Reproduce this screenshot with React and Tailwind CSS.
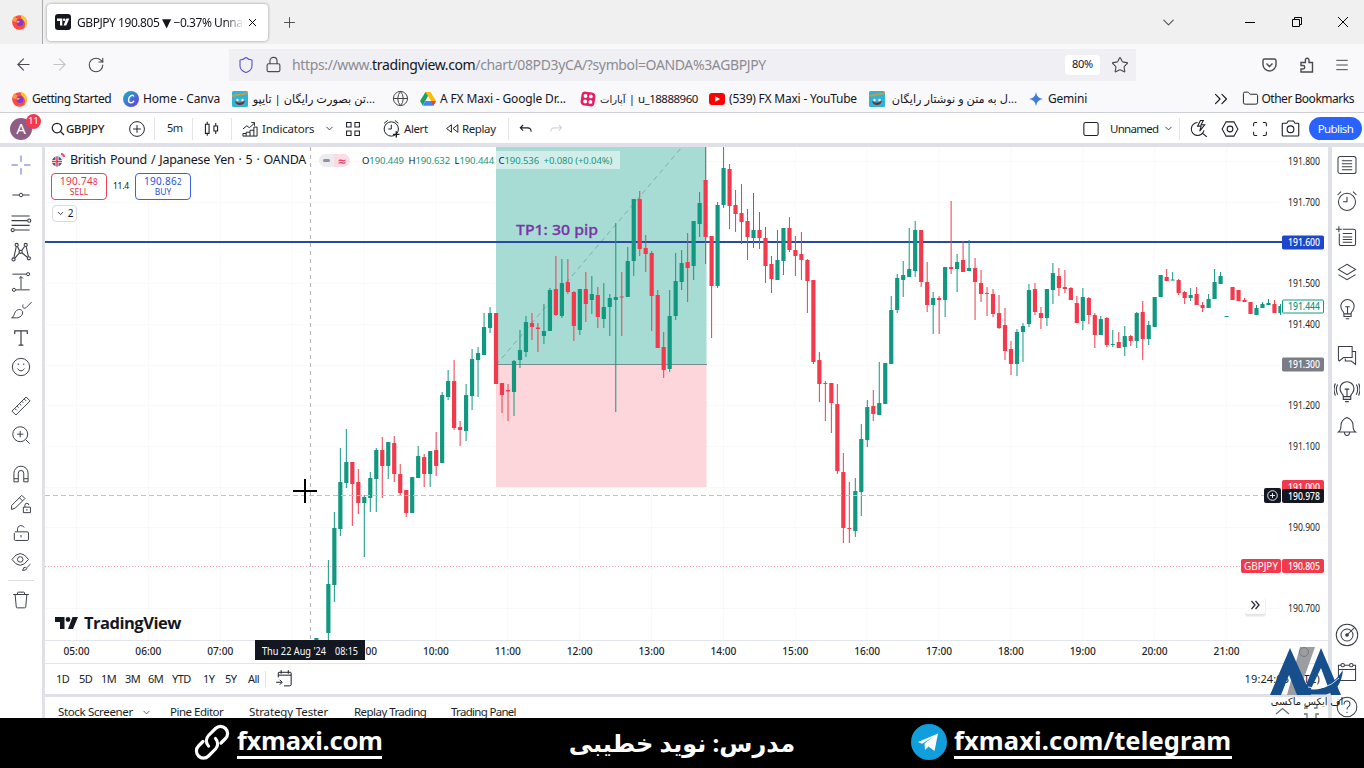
import { ChevronDown, ChevronsRight, Folder, Globe, Menu, Plus, RotateCw, ArrowLeft, ArrowRight, Star, Lock, Shield, X } from "lucide-react";

const UP = "#129880";
const DOWN = "#f23a4c";

// 5 minute candles: [high, bodyTop, bodyBottom, low, direction], null = no candle
const candles = [
  null,
  [638, 638, 640, 640, 1],
  null,
  [560, 584, 633, 640, 1],
  [512, 528, 585, 602, 1],
  [448, 482, 529, 536, 1],
  [429, 462, 483, 488, 1],
  [462, 462, 484, 526, 0],
  [469, 482, 503, 514, 0],
  [495, 497, 503, 557, 1],
  [472, 478, 498, 512, 1],
  [448, 450, 479, 512, 1],
  [437, 450, 466, 498, 0],
  [442, 442, 466, 479, 1],
  [436, 443, 474, 482, 0],
  [464, 474, 493, 496, 0],
  [490, 490, 513, 517, 0],
  [477, 477, 513, 513, 1],
  [446, 456, 478, 478, 1],
  [454, 457, 474, 487, 0],
  [451, 451, 474, 487, 1],
  [432, 450, 466, 476, 0],
  [392, 395, 463, 463, 1],
  [370, 381, 397, 400, 1],
  [360, 381, 428, 430, 0],
  [421, 427, 430, 446, 0],
  [384, 395, 431, 441, 1],
  [349, 359, 396, 410, 1],
  [347, 353, 360, 397, 1],
  [313, 327, 355, 355, 1],
  [307, 313, 328, 333, 1],
  [313, 313, 384, 384, 0],
  [383, 383, 395, 413, 0],
  [384, 390, 391.5, 421, 0],
  [360, 361, 392, 416, 1],
  [330, 350, 360, 368, 1],
  [316, 322, 352, 357, 1],
  [313, 323, 327, 340, 0],
  [323, 327.5, 329, 352, 0],
  [304, 331, 336, 344, 1],
  [288, 290, 331, 331, 1],
  [256, 289, 315, 316, 0],
  [259, 283, 316, 318, 1],
  [259, 282, 292, 294, 0],
  [291, 292, 326, 341, 0],
  [289, 289, 330, 335, 1],
  [272, 289, 304, 322, 0],
  [276, 294, 300, 314, 1],
  [287, 295, 317, 328, 0],
  [283, 307, 319, 328, 1],
  [294, 298, 307, 336, 1],
  [223, 297, 300, 412, 1],
  [272, 296.5, 297.5, 336, 0],
  [247, 261, 297, 297, 1],
  [199, 199, 261, 276, 1],
  [191, 199, 249, 256, 0],
  [235, 248, 254, 272, 0],
  [251, 253, 296, 331, 0],
  [290, 295, 348, 348, 0],
  [332, 347, 370, 378, 0],
  [290, 316, 369, 372, 1],
  [253, 281, 316, 320, 1],
  [250, 263, 282, 290, 1],
  [233, 262, 268, 302, 0],
  [221, 221, 266, 280, 1],
  [192, 203, 224, 237, 1],
  [147, 180, 237, 264, 0],
  [236, 236, 286, 338, 0],
  [202, 205, 286, 288, 1],
  [147, 168, 205, 208, 1],
  [164, 169, 206, 229, 0],
  [190, 205, 214, 232, 0],
  [184, 213, 222, 244, 0],
  [209, 221, 237, 260, 0],
  [193, 230, 238, 248, 1],
  [212, 230, 238, 249, 0],
  [227, 238, 266, 283, 0],
  [256, 264, 279, 293, 0],
  [230, 260, 280, 280, 1],
  [228, 228, 261, 275, 1],
  [217, 228, 250, 252, 0],
  [236, 250, 256, 276, 0],
  [232, 254, 260, 280, 0],
  [259, 260, 281, 313, 0],
  [280, 280, 362, 364, 0],
  [352, 360, 384, 402, 0],
  [381, 383, 384, 421, 0],
  [383, 383, 403, 433, 0],
  [384, 404, 471, 474, 0],
  [453, 472, 528, 543, 0],
  [482, 528, 529, 543, 0],
  [478, 491, 531, 537, 1],
  [424, 439, 492, 516, 1],
  [400, 407, 440, 447, 1],
  [390, 406, 414, 421, 0],
  [362, 403, 415, 415, 1],
  [363, 363, 404, 404, 1],
  [296, 310, 364, 364, 1],
  [274, 278, 310, 313, 1],
  [261, 275, 280, 297, 1],
  [228, 269, 277, 277, 1],
  [221, 230, 271, 277, 1],
  [230, 230, 282, 287, 0],
  [262, 282, 305, 312, 0],
  [292, 298, 305, 334, 1],
  [296, 298, 300, 334, 0],
  [267, 267, 300, 317, 1],
  [201, 267, 269, 274, 0],
  [254, 262, 269, 292, 1],
  [241, 260, 272, 272, 0],
  [240, 268, 271, 271, 1],
  [258, 268, 282, 320, 0],
  [270, 283, 294, 302, 0],
  [287, 293, 294, 316, 0],
  [289, 294, 314, 317, 0],
  [295, 313, 328, 329, 0],
  [308, 325, 351, 360, 0],
  [341, 349, 364, 375, 0],
  [329, 332, 364, 376, 1],
  [323, 326, 332, 362, 1],
  [284, 290, 324, 327, 1],
  [283, 289, 312, 315, 0],
  [307, 313, 318, 329, 0],
  [289, 289, 318, 326, 1],
  [263, 273, 290, 304, 1],
  [268, 276, 288, 296, 0],
  [270, 287, 289, 293, 0],
  [287, 288, 300, 300, 0],
  [296, 303, 323, 323, 0],
  [288, 297, 321, 330, 1],
  [297, 298, 315, 324, 0],
  [313, 315, 335, 348, 0],
  [316, 319, 335, 335, 1],
  [317, 318, 345, 347, 0],
  [330, 344, 345, 347, 1],
  [332, 342, 348, 348, 0],
  [326, 336, 347, 356, 1],
  [335, 336, 341, 346, 0],
  [312, 313, 341, 348, 1],
  [301, 312, 339, 360, 0],
  [321, 325, 339, 345, 1],
  [297, 297, 327, 327, 1],
  [275, 275, 297, 297, 1],
  [269, 277, 281, 281, 0],
  [272, 279.5, 280.5, 280.5, 1],
  [279, 280, 293, 295, 0],
  [291, 292, 298, 304, 0],
  [288, 295, 298, 301, 1],
  [287, 294, 305, 305, 0],
  [302, 305, 308, 312, 0],
  [294, 299, 308, 308, 1],
  [269, 282, 299, 299, 1],
  [272, 276, 284, 284, 1],
  [316, 316, 317, 317, 1],
  [287, 287, 300, 300, 0],
  [290, 290, 301, 301, 0],
  [298, 300, 302, 302, 0],
  [302, 302, 314, 314, 0],
  [305, 308, 315, 315, 1],
  [302, 304, 308, 308, 1],
  [299, 303, 305, 305, 1],
  [300, 304, 313, 313, 0],
  [304, 306, 313, 315, 1],
];

const prices = [
  ["191.800", 161], ["191.700", 202], ["191.500", 283], ["191.400", 324],
  ["191.200", 405], ["191.100", 446], ["190.900", 527], ["190.700", 608],
];
const gridY = [161, 202, 283, 324, 365, 405, 446, 487, 527, 608];
const hours = ["05:00", "06:00", "07:00", null, "09:00", "10:00", "11:00", "12:00", "13:00", "14:00", "15:00", "16:00", "17:00", "18:00", "19:00", "20:00", "21:00"];

function Icon({ size = 22, sw = 1.25, className = "", children }) {
  return (
    <svg
      width={size}
      height={size}
      viewBox="0 0 28 28"
      fill="none"
      stroke="currentColor"
      strokeWidth={sw}
      className={`shrink-0 ${className}`}
    >
      {children}
    </svg>
  );
}

function PriceTag({ y, text, fill, color = "#fff", stroke }) {
  return (
    <g>
      <rect x="1282.5" y={y - 6.5} width="41" height="13" rx="1" fill={fill} stroke={stroke || fill} />
      <text x="1288" y={y + 3.8} textLength="32" lengthAdjust="spacingAndGlyphs" fill={color} fontWeight="500">{text}</text>
    </g>
  );
}

function Chart() {
  return (
    <svg width="1283" height="517" viewBox="45 147 1283 517" className="block font-['Noto_Sans',sans-serif]" fontSize="10">
      <rect x="45" y="147" width="1283" height="517" fill="#fff" />
      {gridY.map((y) => (
        <line key={y} x1="45" x2="1281" y1={y + 0.5} y2={y + 0.5} stroke="#f9f9fa" />
      ))}
      {hours.map((h, i) => (
        <line key={i} y1="147" y2="640" x1={76.5 + i * 71.88} x2={76.5 + i * 71.88} stroke="#f9f9fa" />
      ))}

      {/* long position */}
      <rect x="496" y="147" width="210.5" height="218" fill="#a6dcd4" />
      <rect x="496" y="365" width="210.5" height="122" fill="#fdd6dc" />
      <line x1="496" x2="707" y1="364.5" y2="364.5" stroke="#7b8a8c" />
      <line x1="496" y1="365" x2="682" y2="147" stroke="#86a8a5" strokeDasharray="5 4" />

      {/* horizontal level */}
      <rect x="45" y="241" width="1237" height="2" fill="#2849a3" />
      <line x1="45" x2="1241" y1="566.5" y2="566.5" stroke="#f0a0a8" strokeDasharray="1 2" />

      {candles.map((c, i) => {
        if (!c) return null;
        const x = 310.4 + i * 5.988;
        const color = c[4] ? UP : DOWN;
        return (
          <g key={i} fill={color}>
            <rect x={x - 0.5} y={c[0]} width="1" height={Math.max(c[3] - c[0], 1)} />
            <rect x={x - 2.1} y={c[1]} width={i === 162 ? 2.6 : 4.2} height={Math.max(c[2] - c[1], 1)} rx="0.5" />
          </g>
        );
      })}

      <text x="516" y="234.5" textLength="82" lengthAdjust="spacingAndGlyphs" fontSize="15" fontWeight="500" fill="#7a35a8" stroke="#7a35a8" strokeWidth="0.3">TP1: 30 pip</text>

      {/* crosshair */}
      <line x1="310.5" x2="310.5" y1="147" y2="640" stroke="#b2b4bb" strokeDasharray="4 4" />
      <line x1="45" x2="1265" y1="495.5" y2="495.5" stroke="#bfc1c7" strokeDasharray="5 3" />
      <path d="M293 491h24M305 479v24" stroke="#000" strokeWidth="2" />

      {/* price axis */}
      <g fill="#1c1f27">
        {prices.map(([p, y]) => (
          <text key={p} x="1288" y={y + 4} textLength="32" lengthAdjust="spacingAndGlyphs">{p}</text>
        ))}
      </g>
      <PriceTag y={242.5} text="191.600" fill="#1d46cc" />
      <PriceTag y={306.5} text="191.444" fill="#fff" color={UP} stroke={UP} />
      <PriceTag y={364.5} text="191.300" fill="#7b7d86" />
      <PriceTag y={487} text="191.000" fill="#f23a4c" />
      <PriceTag y={496} text="190.978" fill="#131722" />
      <rect x="1264" y="488" width="17" height="15" rx="2" fill="#131722" />
      <circle cx="1272.5" cy="495.5" r="4.8" fill="none" stroke="#fff" strokeWidth="0.9" />
      <path d="M1270 495.5h5M1272.5 493v5" stroke="#fff" strokeWidth="0.9" />
      <rect x="1241" y="559" width="40" height="14" rx="2" fill="#f23a4c" />
      <text x="1244" y="570" textLength="34" lengthAdjust="spacingAndGlyphs" fill="#fff">GBPJPY</text>
      <PriceTag y={566} text="190.805" fill="#f23a4c" />

      {/* scroll to last bar */}
      <rect x="1245" y="597" width="21" height="20" rx="3" fill="#f1f1f2" />
      <rect x="1245.500" y="596.5" width="19.500" height="19" rx="2" fill="#e2e2e4" />
      <rect x="1245" y="594" width="20" height="20" rx="2" fill="#fff" />
      <path d="M1251.5 601l3.5 4-3.5 4M1255.5 601l3.5 4-3.5 4" fill="none" stroke="#2a2e39" strokeWidth="1.3" />

      {/* time axis */}
      <line x1="45" x2="1328" y1="640.5" y2="640.5" stroke="#e3e5ec" />
      <line x1="45" x2="1328" y1="663.5" y2="663.5" stroke="#e3e5ec" />
      <g fill="#1c1f27" fontWeight="500" textAnchor="middle">
        {hours.map((h, i) => h && (
          <text key={h} x={76.5 + i * 71.88} y="655" textLength="26" lengthAdjust="spacingAndGlyphs">{h}</text>
        ))}
      </g>
      <rect x="255" y="640" width="110" height="20" fill="#131722" />
      <g fill="#fff">
        <text x="262" y="655" textLength="64" lengthAdjust="spacingAndGlyphs">Thu 22 Aug '24</text>
        <text x="335" y="655" textLength="23" lengthAdjust="spacingAndGlyphs">08:15</text>
      </g>
    </svg>
  );
}

function TabBar() {
  return (
    <div className="flex h-[44px] items-center bg-[#f0f0f0]">
      <Firefox className="ml-3" />
      <div className="ml-[14px] h-[44px] w-px bg-[#a9a9ad]" />
      <div className="ml-1 flex h-[37px] w-[221px] items-center rounded bg-white shadow-[0_0_3px_rgba(0,0,0,0.4)]">
        <TvBadge />
        <span className="ml-[6px] w-[167px] overflow-hidden pt-px whitespace-nowrap text-[12px] tracking-[-0.45px] text-[#15141a] [mask-image:linear-gradient(to_right,black_88%,transparent)]">
          GBPJPY 190.805 ▼ −0.37% Unna
        </span>
        <X size={13} strokeWidth={1.8} className="ml-[2px]" />
      </div>
      <Plus size={17} strokeWidth={1.3} className="ml-[13px] text-[#444]" />
      <ChevronDown size={19} strokeWidth={1.4} className="ml-auto mr-[67px] text-[#555]" />
      <div className="h-px w-[10px] bg-black" />
      <svg width="12" height="12" viewBox="0 0 12 12" fill="none" stroke="#000" className="ml-[36px]">
        <path d="M1.5 3.5h7v7h-7zM3.5 3.5v-2h7v7h-2" />
      </svg>
      <svg width="12" height="12" viewBox="0 0 12 12" stroke="#000" className="ml-[34px] mr-[15px]">
        <path d="M1 1l10 10M11 1L1 11" />
      </svg>
    </div>
  );
}

function Firefox({ className = "" }) {
  return (
    <svg width="16" height="16" viewBox="0 0 16 16" className={`shrink-0 ${className}`}>
      <circle cx="7.500" cy="8.500" r="7.300" fill="#ff4a3d" />
      <path d="M9 .5c3 1.300 6 4 6 8a7 7 0 0 1-3 5.500c2-4 1-7-2-9C9 4 8.500 2 9 .5z" fill="#ffc933" />
      <path d="M.5 7c0-2 1-4 2-5 .5 1.500 1.500 2 3 2L4 8z" fill="#ff9640" />
      <circle cx="8" cy="8.600" r="3.500" fill="#8338d8" />
      <path d="M4 8c1.500-2 3-1.500 4-.5L6 9z" fill="#ffb03a" />
    </svg>
  );
}

function TvBadge() {
  return (
    <svg width="16" height="16" viewBox="0 0 16 16" className="ml-2 shrink-0">
      <rect width="16" height="16" rx="3" fill="#131722" />
      <path d="M2 4.500h5.300v7H5V7H2zM11.300 4.500h3l-3 7H8.500z" fill="#fff" />
      <circle cx="9.200" cy="5.700" r="1.300" fill="#fff" />
    </svg>
  );
}

function NavBar() {
  return (
    <div className="flex h-[41px] items-center bg-[#f9f9fb] text-[#4a4a52]">
      <ArrowLeft size={19} strokeWidth={1.4} className="ml-[14px]" />
      <ArrowRight size={19} strokeWidth={1.4} className="ml-[17px] text-[#c4c4c9]" />
      <RotateCw size={18} strokeWidth={1.5} className="ml-[18px]" />
      <div className="ml-[124px] flex h-8 w-[907px] items-center bg-[#f0f0f4]">
        <Shield size={18} strokeWidth={1.5} className="ml-2 text-[#5b55c9]" />
        <Lock size={17} strokeWidth={1.6} className="ml-[10px]" />
        <span className="ml-[10px] whitespace-nowrap text-[14px] tracking-[-0.365px] text-[#8b8b93]">
          https://www.<span className="text-[#15141a]">tradingview.com</span>/chart/08PD3yCA/?symbol=OANDA%3AGBPJPY
        </span>
        <span className="ml-auto flex h-5 w-[35px] items-center justify-center rounded-sm bg-white text-[11px] tracking-[-0.3px] text-[#15141a]">80%</span>
        <Star size={18} strokeWidth={1.5} className="ml-[11px] mr-[7px]" />
      </div>
      <svg width="15" height="14" viewBox="0 0 15 14" fill="none" stroke="currentColor" strokeWidth="1.400" className="ml-auto">
        <path d="M2.500 1h10a1.500 1.500 0 0 1 1.500 1.500V6.500a6.500 6.500 0 0 1-13 0v-4A1.500 1.500 0 0 1 2.500 1zM4.500 5.500l3 3 3-3" />
      </svg>
      <svg width="15" height="16" viewBox="0 0 15 16" fill="none" stroke="currentColor" strokeWidth="1.400" className="ml-[22px]">
        <path d="M2 15h11.500V5.500H10V3a1.800 1.800 0 0 0-3.600 0v2.500H2V8.500h2a1.700 1.700 0 0 1 0 3.500H2z" />
      </svg>
      <Menu size={16} strokeWidth={1.5} className="ml-[20px] mr-[14px]" />
    </div>
  );
}

function CartoonFace() {
  return (
    <svg width="16" height="16" viewBox="0 0 16 16" className="shrink-0">
      <rect width="16" height="16" rx="1.500" fill="#2fb4d6" />
      <path d="M0 4L16 1v2L0 6z" fill="#c59a4a" />
      <circle cx="5.500" cy="9" r="1.200" fill="#fff" />
      <circle cx="10.500" cy="9" r="1.200" fill="#fff" />
      <path d="M3 10q5 3.500 10-.5-1 4.500-5 4.500t-5-4z" fill="#7a2b33" />
    </svg>
  );
}

function Bookmarks() {
  return (
    <div className="flex h-[28px] items-center border-b border-[#cfcfd8] bg-[#f9f9fb] text-[12px] leading-none whitespace-nowrap text-[#15141a]">
      <Firefox className="ml-3" />
      <span className="ml-1 w-[91px] tracking-[-0.48px]">Getting Started</span>
      <svg width="16" height="16" viewBox="0 0 16 16" className="shrink-0">
        <defs>
          <linearGradient id="canva" x1="0" y1="0" x2="1" y2="1">
            <stop offset="0" stopColor="#18b5c9" />
            <stop offset="1" stopColor="#6a35e0" />
          </linearGradient>
        </defs>
        <circle cx="8" cy="8" r="8" fill="url(#canva)" />
        <path d="M11 5.500C9.500 3 5.500 5 5.500 9c0 3.500 4 3.500 5.500.8" fill="none" stroke="#fff" strokeWidth="1.400" />
      </svg>
      <span className="ml-1 w-[89px] tracking-[-0.15px]">Home - Canva</span>
      <CartoonFace />
      <span dir="rtl" className="ml-1 w-[123px] text-right text-[11.300px]">...تن بصورت رایگان | تایپو</span>
      <Globe size={17} strokeWidth={1.400} className="ml-[17px] shrink-0 text-[#444]" />
      <svg width="16" height="14" viewBox="0 0 16 14" className="ml-[11px] shrink-0">
        <path d="M5.500 0h5L16 9h-5z" fill="#fbbc04" />
        <path d="M5.500 0L8 4 2.700 13.500 0 9z" fill="#1aa260" />
        <path d="M5.300 9H16l-2.700 4.700H2.700z" fill="#4285f4" />
        <path d="M11 9h5l-2.700 4.700z" fill="#ea4335" />
      </svg>
      <span className="ml-1 w-[140px] tracking-[-0.15px]">A FX Maxi - Google Dr...</span>
      <svg width="16" height="16" viewBox="0 0 16 16" className="shrink-0">
        <rect x="1" y="1" width="14" height="14" rx="4" fill="#e91e63" transform="rotate(8 8 8)" />
        <g fill="#fff">
          <circle cx="5.500" cy="5" r="1.900" />
          <circle cx="10.800" cy="5.400" r="1.900" />
          <circle cx="5.200" cy="10.500" r="1.900" />
          <circle cx="10.400" cy="10.900" r="1.900" />
        </g>
      </svg>
      <span className="ml-1 w-[109px] text-[11.500px] tracking-[-0.5px]"><span className="text-[10px] tracking-normal">آپارات</span> | u_18888960</span>
      <svg width="16" height="12" viewBox="0 0 16 12" className="shrink-0">
        <rect width="16" height="12" rx="3" fill="#f00" />
        <path d="M6.300 3.300v5.400L11 6z" fill="#fff" />
      </svg>
      <span className="ml-1 w-[140px] tracking-[-0.22px]">(539) FX Maxi - YouTube</span>
      <CartoonFace />
      <span dir="rtl" className="ml-1 w-[128px] text-right text-[11.300px]">...ل به متن و نوشتار رایگان</span>
      <svg width="14" height="14" viewBox="0 0 14 14" className="ml-[12px] shrink-0">
        <path d="M7 0q.8 6.200 7 7-6.200.8-7 7-.8-6.200-7-7 6.200-.8 7-7z" fill="#3f7bd8" />
      </svg>
      <span className="ml-[5px] tracking-[-0.2px]">Gemini</span>
      <ChevronsRight size={22} strokeWidth={1.200} className="ml-auto mr-[10px]" />
      <Folder size={17} strokeWidth={1.300} />
      <span className="ml-[2px] mr-[10px] tracking-[-0.48px]">Other Bookmarks</span>
    </div>
  );
}

const Sep = ({ className }) => <div className={`h-[22px] w-px shrink-0 bg-[#e3e4ea] ${className}`} />;

function Toolbar() {
  return (
    <div className="flex h-[30px] items-center bg-white pt-px text-[11.5px] whitespace-nowrap text-[#1c1f27]">
      <div className="relative ml-[10px] flex size-[22px] shrink-0 items-center justify-center rounded-full bg-[#8e5d86] text-[15px] text-white">
        A
        <span className="absolute -right-[9px] -top-[4px] flex size-[15px] items-center justify-center rounded-full bg-[#f23a4c] text-[9px]">11</span>
      </div>
      <Icon size={14} sw={2.500} className="ml-[19px]"><circle cx="12" cy="12" r="9.500" /><path d="M19 19l7 7" /></Icon>
      <span className="ml-px w-[62px] text-[11.500px] font-medium tracking-[-0.3px]">GBPJPY</span>
      <Icon size={18} sw={1.500}><circle cx="14" cy="14" r="11.500" /><path d="M14 8v12M8 14h12" /></Icon>
      <Sep className="ml-[8px]" />
      <span className="ml-[12px] w-[25px] text-[11px] tracking-[-0.6px]">5m</span>
      <Sep />
      <Icon size={17} sw={1.800} className="ml-[10px]"><path d="M4 7h6v15H4zM7 3v4M7 22v4M18 10h6v8h-6zM21 5v5M21 18v5" /></Icon>
      <Sep className="ml-[11px]" />
      <Icon size={18} sw={1.500} className="ml-[9px]"><path d="M3 25h22V11h-5v14M20 16h-6v9M14 19H8v6M3 25v-4h5M3 14l6-5 4 3 8-7M16 4h5v5" /></Icon>
      <span className="ml-[3px] w-[62px] tracking-[-0.2px]">Indicators</span>
      <ChevronDown size={11} strokeWidth={1.800} />
      <Icon size={18} sw={1.600} className="ml-[9px]"><path d="M4 4h7v7H4zM17 4h7v7h-7zM4 17h7v7H4zM17 17h7v7h-7z" /></Icon>
      <Icon size={20} sw={1.400} className="ml-[20px]"><circle cx="13" cy="14" r="10" /><path d="M13 8v6H9M3 6l5-4M18 2l5 4" /><path d="M20 17v9M15.500 21.500h9" strokeWidth="2" /></Icon>
      <span className="ml-[2px] w-[41px] tracking-[-0.4px]">Alert</span>
      <Icon size={15} sw={1.800}><path d="M12 7v14L3 14zM24 7v14l-9-7z" /></Icon>
      <span className="ml-[2px] w-[46px] tracking-[-0.4px]">Replay</span>
      <Sep />
      <Icon size={16} sw={1.900} className="ml-[9px]"><path d="M9 7l-5 5 5 5M4 12h13q6 0 6 7" /></Icon>
      <Icon size={16} sw={1.900} className="ml-[14px] text-[#d5d6da]"><path d="M19 7l5 5-5 5M24 12H11q-6 0-6 7" /></Icon>
      <Icon size={20} sw={1.500} className="ml-auto"><rect x="4" y="5" width="20" height="18" rx="2.500" /></Icon>
      <span className="ml-[9px] w-[53px] tracking-[-0.7px]">Unnamed</span>
      <ChevronDown size={11} strokeWidth={1.800} />
      <Sep className="ml-[5px]" />
      <Icon size={20} sw={1.500} className="ml-[9px]"><path d="M12 5a9 9 0 1 0 9 11M19 20l6 5M16 2l-4 8h5l-2 7 7-9h-5l3-6z" /></Icon>
      <Icon size={20} sw={1.500} className="ml-[11px]"><path d="M8.500 4h11L25 14l-5.500 10h-11L3 14z" /><circle cx="14" cy="14" r="4" /></Icon>
      <Icon size={20} sw={1.500} className="ml-[10px]"><path d="M5 10V7q0-2 2-2h3M18 5h3q2 0 2 2v3M23 18v3q0 2-2 2h-3M10 23H7q-2 0-2-2v-3" /></Icon>
      <Icon size={21} sw={1.500} className="ml-[10px]"><path d="M3 8q0-1 1-1h5l2-3h7l2 3h4q1 0 1 1v15q0 1-1 1H4q-1 0-1-1z" /><circle cx="14" cy="15" r="4.500" /></Icon>
      <div className="ml-[8px] mr-[2px] flex h-[23px] w-[53px] items-center justify-center rounded-full bg-[#2962ff] text-[11.5px] tracking-[-0.6px] text-white">Publish</div>
    </div>
  );
}

function LeftTools() {
  return (
    <div className="flex w-[42px] flex-col items-center bg-white text-[#3a3d47]">
      <Icon className="mt-[7px] text-[#5a68c0]"><path d="M14 2v8M14 18v8M2 14h8M18 14h8" /></Icon>
      <Icon className="mt-[8px]"><path d="M3 14h8.500M16.500 14H25" /><circle cx="14" cy="14" r="2.300" /></Icon>
      <Icon className="mt-[6px]" sw={1.400}><path d="M2 5h23M2 11h20M2 17h23M6 23h19" /><circle cx="24.500" cy="11" r="2" /><circle cx="3.500" cy="23" r="2" /></Icon>
      <Icon className="mt-[7px]" sw={1.400}><path d="M8 7L5 21M9.500 7l3 6M15 15l7.500 6M18.500 7L15 12M12 15l-6 7M20.500 7L23.500 20" /><circle cx="13.500" cy="13.700" r="2" /><circle cx="8.500" cy="5" r="2" /><circle cx="20" cy="5" r="2" /><circle cx="4.500" cy="23.500" r="2" /><circle cx="24" cy="22" r="2" /></Icon>
      <Icon className="mt-[8px]"><path d="M3 4h18M7 24h18M14 23V7M11.500 9.500L14 7l2.500 2.500" /><circle cx="23" cy="4" r="2" /><circle cx="5" cy="24" r="2" /></Icon>
      <Icon className="mt-[6px]"><path d="M2 24c3-1 3-5 5-8 3-4 8-3 9 0 1 5-4 8-8 8zM16.500 7c-1 4 1 6 4 4l7-7" /></Icon>
      <Icon className="mt-[6px]" sw={1.500}><path d="M6 9V5h16v4M14 5v18M11 23h6" /></Icon>
      <Icon className="mt-[7px]"><circle cx="14" cy="14" r="11" /><path d="M9.500 16q4.500 6 9 0M10.500 9.500v2M17.500 9.500v2" /></Icon>
      <Icon className="mt-[17px]"><path d="M2.500 20.500l18-18 5 5-18 18zM6 17l2.500 2.500M9 14l2 2M12 11l2.500 2.500M15 8l2 2M18 5l2.500 2.500" /></Icon>
      <Icon className="mt-[7px]"><circle cx="13" cy="13" r="9.500" /><path d="M20 20l5 5M13 9v8M9 13h8" /></Icon>
      <Icon className="mt-[17px]"><path d="M5 24V13a9 9 0 0 1 18 0v11h-5.500V13a3.500 3.500 0 0 0-7 0v11zM5 20h5.500M17.500 20H23" /></Icon>
      <Icon className="mt-[8px]"><path d="M2 16L15 3l4 4L7 19l-5 2zM12 6l4 4M17 18h9v7h-9zM19 18v-2.500a2.500 2.500 0 0 1 5 0M21.500 20.500v2" /></Icon>
      <Icon className="mt-[7px]"><path d="M6 12.500h16q1.500 0 1.500 1.500v8q0 1.500-1.500 1.500H7q-1.500 0-1.500-1.500v-8M9.500 12V8.500A4.500 4.500 0 0 1 18 7M14 16.500v3" /></Icon>
      <Icon className="mt-[6px]"><path d="M2.500 12q10.500-15 21 0-10.500 15-21 0z" /><circle cx="13" cy="12" r="3.500" /><path d="M26 18l-6 6M20 22q-3-1-4 4 5 0 5.500-2.500" /></Icon>
      <div className="mt-[8px] h-px w-[26px] bg-[#dcdee5]" />
      <Icon className="mt-[8px]"><path d="M4 7h20M9.500 7V5q0-1 1-1h7q1 0 1 1v2M6.500 7l1.500 16q0 1 1.500 1h9q1.500 0 1.500-1L21.500 7" /></Icon>
    </div>
  );
}

function Bulb() {
  return (
    <>
      <path d="M10 20q0-2-2-4a7.500 7.500 0 1 1 12 0q-2 2-2 4zM10 20v3h8v-3M12 25.500h4M11.500 12h5M14 12v8" />
    </>
  );
}

function RightTools() {
  return (
    <div className="flex w-[32px] flex-col items-center bg-white pr-[2px] text-[#3a3d47]">
      <Icon size={24} sw={1.200} className="mt-[6px]"><rect x="3.500" y="4" width="21" height="20" rx="2.500" /><path d="M8 9h12M8 12.500h12M8 16h12M8 19.500h12" /></Icon>
      <Icon size={24} sw={1.200} className="mt-[12px]"><circle cx="14" cy="15" r="10" /><path d="M14 9v6H9.500M3 7l4-4M21 3l4 4" /></Icon>
      <Icon size={24} sw={1.200} className="mt-[12px]"><path d="M9 5h13q2 0 2 2v15q0 2-2 2H7q-2 0-2-2V10M9 10h11M9 14h11M9 17h11M9 20h11M1 5h7M4.500 1.500v7" /></Icon>
      <Icon size={24} sw={1.200} className="mt-[11px]"><path d="M14 5l10 6-10 6-10-6zM4 17l10 6 10-6" /></Icon>
      <Icon size={25} sw={1.200} className="mt-[12px]"><Bulb /></Icon>
      <div className="mt-[10px] h-px w-[25px] bg-[#dcdee5]" />
      <Icon size={24} sw={1.200} className="mt-[12px]"><path d="M4 4h16v13H10l-5 4-1-1zM20 10h4v15l-5-4h-7v-3" /></Icon>
      <Icon size={26} sw={1.200} className="mt-[11px]"><Bulb /><path d="M4 7q-3 5 0 11M1.500 6q-3 6 0 13M24 7q3 5 0 11M26.500 6q3 6 0 13" /></Icon>
      <Icon size={24} sw={1.200} className="mt-[10px]"><path d="M4 21q3-2 3-8 0-6 7-9 7 3 7 9 0 6 3 8zM11 21q0 4 3 4t3-4" /></Icon>
      <Icon size={24} sw={1.200} className="mt-[185px]"><circle cx="14" cy="14" r="12.500" /><circle cx="14" cy="14" r="7" /><circle cx="14" cy="14" r="1.500" fill="currentColor" /><path d="M14 14L23 5" /></Icon>
      <Icon size={24} sw={1.200} className="mt-[13px]"><path d="M4 6h20v18H4zM4 11h20" /><circle cx="9" cy="6" r="2" fill="#fff" /><circle cx="19" cy="6" r="2" fill="#fff" /></Icon>
      <Icon size={24} sw={1.200} className="mt-[11px]"><circle cx="14" cy="14" r="11.500" /><path d="M10.500 11q0-4 3.500-4t3.500 3.500q0 2-2 3.300-1.500 1-1.500 3.200M14 19.500v1.500" /></Icon>
    </div>
  );
}

function Legend() {
  return (
    <div className="absolute left-[6px] top-[3px] text-[#131722]">
      <div className="flex h-[20px] items-center whitespace-nowrap">
        <svg width="14" height="14" viewBox="0 0 14 14">
          <circle cx="10" cy="4" r="3" fill="#e9eaf0" />
          <path d="M10 1a3 3 0 0 1 3 3" stroke="#f0506a" strokeWidth="2" fill="none" />
          <circle cx="6" cy="8.500" r="5" fill="#3c5aa6" />
          <path d="M1 8.500h10M6 3.500v10" stroke="#fff" strokeWidth="3" />
          <path d="M1 8.500h10M6 3.500v10" stroke="#e0384c" strokeWidth="1.500" />
        </svg>
        <span className="ml-[5px] w-[237px] text-[12.500px] tracking-[-0.27px] [word-spacing:1px]">British Pound / Japanese Yen · 5 · OANDA</span>
        <span className="ml-[12px] flex h-[13px] w-[31px] text-[11px] leading-[13px]">
          <span className="flex w-[15px] items-center justify-center rounded-l-full bg-[#ececf0]"><i className="h-[3px] w-[7px] rounded bg-[#8f929c]" /></span>
          <span className="w-[16px] rounded-r-full bg-[#fbdce4] text-center font-bold text-[#e8466c]">≈</span>
        </span>
        <span className="ml-[8px] flex h-[18px] w-[262px] items-center gap-[4.500px] bg-white/50 pl-[4px] pt-[2px] text-[9.500px] tracking-[-0.08px]">
          {[["O", "190.449"], ["H", "190.632"], ["L", "190.444"], ["C", "190.536"]].map(([k, v]) => (
            <span key={k}>{k}<span className="text-[#129880]">{v}</span></span>
          ))}
          <span className="text-[#129880]">+0.080 (+0.04%)</span>
        </span>
      </div>
      <div className="mt-[3px] flex items-center text-center">
        <div className="flex h-[27px] w-[56px] flex-col justify-center rounded border border-[#e8415a] bg-white text-[#e8304a]">
          <span className="text-[10px] leading-[11px] tracking-[0.3px]">190.74<span className="text-[8px]">8</span></span>
          <span className="text-[8.500px] leading-[10px]">SELL</span>
        </div>
        <span className="w-[28px] text-[8.500px] tracking-[-0.2px]">11.4</span>
        <div className="flex h-[27px] w-[56px] flex-col justify-center rounded border border-[#3a63e0] bg-white text-[#2952e0]">
          <span className="text-[10px] leading-[11px] tracking-[0.3px]">190.86<span className="text-[8px]">2</span></span>
          <span className="text-[8.500px] leading-[10px]">BUY</span>
        </div>
      </div>
      <div className="ml-px mt-[5px] flex h-[17px] w-[25px] items-center justify-center gap-[3px] rounded-sm border border-[#d9dbe2] text-[10px]">
        <ChevronDown size={9} strokeWidth={2.200} />2
      </div>
    </div>
  );
}

function TvLogo() {
  return (
    <div className="absolute left-[10px] top-[465px] flex h-[22px] items-center text-[#131722]">
      <svg width="23" height="13" viewBox="0 0 23 13" fill="currentColor">
        <path d="M0 0h9.500v12H5V5H0zM17.500 0H23l-5 12h-5z" />
        <circle cx="13" cy="2.500" r="2.400" />
      </svg>
      <span className="ml-[6px] font-['Open_Sans',sans-serif] text-[16.500px] font-bold tracking-[-0.5px]">TradingView</span>
    </div>
  );
}

function RangeBar() {
  const ranges = [["1D", "w-[23px]"], ["5D", "w-[22px]"], ["1M", "w-[24px]"], ["3M", "w-[23px]"], ["6M", "w-[24px]"], ["YTD", "w-[31px]"], ["1Y", "w-[22px]"], ["5Y", "w-[23px]"], ["All", "w-[17px]"]];
  return (
    <div className="flex h-[30px] items-center bg-white pl-[11px] text-[11px] tracking-[-0.55px] text-[#1c1f27]">
      {ranges.map(([label, w]) => (
        <span key={label} className={w}>{label}</span>
      ))}
      <div className="h-[16px] w-px bg-[#e0e2e9]" />
      <Icon size={20} sw={1.400} className="-mt-[3px] ml-[8px]"><path d="M6 13V7q0-1 1-1h16q1 0 1 1v16q0 2-2 2H14M6 10h18M10 3v5M20 3v5M3 20h8M8 16.500l3.500 3.500L8 23.500" /></Icon>
      <span className="ml-auto mr-[8px] tracking-[0.1px]">19:24:05 (UTC)</span>
    </div>
  );
}

function PanelTabs() {
  return (
    <div className="flex h-[21px] items-center bg-white pl-[13px] pt-[9px] text-[11.500px] whitespace-nowrap text-[#1c1f27]">
      <span className="w-[83px] tracking-[-0.35px]">Stock Screener</span>
      <ChevronDown size={11} strokeWidth={1.500} />
      <span className="ml-[18px] w-[79px] tracking-[-0.5px]">Pine Editor</span>
      <span className="w-[105px] tracking-[-0.13px]">Strategy Tester</span>
      <span className="w-[97px] tracking-[-0.55px]">Replay Trading</span>
      <span className="tracking-[-0.7px]">Trading Panel</span>
      <svg width="50" height="14" viewBox="0 0 50 14" fill="none" stroke="#6d7079" strokeWidth="1.300" className="ml-auto mr-[8px]">
        <path d="M6 9l6.500-5.500L19 9M37 0v3h-3M34 9h3v4M47 0v3h-3M49 9h-3v4" />
      </svg>
    </div>
  );
}

function Watermark() {
  return (
    <div className="absolute left-[1268px] top-[646px] flex w-[78px] flex-col items-center">
      <svg width="78" height="50" viewBox="0 0 78 50" className="block">
        <path d="M32 1h15L30 49H19z" fill="#9b9da1" />
        <circle cx="36" cy="6" r="4.500" fill="none" stroke="#77797e" />
        <path d="M22 2L2 49h11l8-20 8 20h14z" fill="#164f8c" />
        <path d="M53 2L36 44l4 5 13-27 10 27h10z" fill="#164f8c" />
        <path d="M37 42q21 7 38-18-2 20-17 24.500H40z" fill="#164f8c" />
        <path d="M40 41q17 5 31-9" fill="none" stroke="#fff" strokeWidth="0.800" />
      </svg>
      <div dir="rtl" className="-mt-[1px] whitespace-nowrap text-[10px] leading-[13px] text-[#1a1a1a]">اف ایکس ماکسی</div>
    </div>
  );
}

function Footer() {
  return (
    <div className="flex h-[50px] items-center bg-black text-[25.500px] leading-none font-bold whitespace-nowrap text-white">
      <svg width="36" height="36" viewBox="0 0 36 36" fill="none" stroke="#fff" strokeWidth="3.200" strokeLinecap="round" className="-mt-[3px] ml-[194px]">
        <path d="M14.500 22a7.500 7.500 0 0 1 0-10.500l7-7A7 7 0 0 1 31.500 14.500l-4.500 4.500" />
        <path d="M21.500 14.500a7.500 7.500 0 0 1 0 10.500l-7 7A7 7 0 0 1 4.500 22l4.500-4.500" />
      </svg>
      <span className="ml-[7px] w-[145px] border-b-[3px] border-white pb-[2px] pt-px tracking-[-0.25px]">fxmaxi.com</span>
      <span dir="rtl" className="ml-[187px] w-[226px] text-center text-[24px]">مدرس: نوید خطیبی</span>
      <svg width="36" height="36" viewBox="0 0 36 36" className="-mt-[2px] ml-[116px]">
        <circle cx="18" cy="18" r="18" fill="#109fdc" />
        <path d="M7 18L27 9.500 23.500 27l-6-4.500-3.500 3.500-.5-6.500L22 13 11 19.800z" fill="#fff" />
      </svg>
      <span className="ml-[7px] w-[278px] border-b-[3px] border-white pb-[2px] pt-px tracking-[0.12px]">fxmaxi.com/telegram</span>
    </div>
  );
}

export default function App() {
  return (
    <div className="relative flex h-[768px] w-[1364px] flex-col overflow-hidden bg-white font-['Noto_Sans','DejaVu_Sans',sans-serif]">
      <TabBar />
      <NavBar />
      <Bookmarks />
      <Toolbar />
      <div className="h-[4px] bg-[#e0e1e8]" />
      <div className="flex h-[571px]">
        <LeftTools />
        <div className="w-[3px] bg-[#e0e1e8]" />
        <div className="relative w-[1283px]">
          <Chart />
          <Legend />
          <TvLogo />
          <RangeBar />
          <div className="h-[3px] bg-[#e0e1e8]" />
          <PanelTabs />
        </div>
        <div className="w-[4px] bg-[#e0e1e8]" />
        <RightTools />
      </div>
      <Footer />
      <Watermark />
    </div>
  );
}
